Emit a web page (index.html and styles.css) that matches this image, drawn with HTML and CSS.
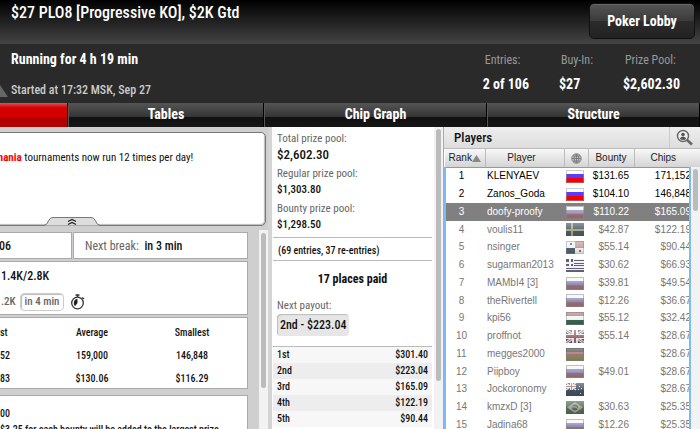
FILE: index.html
```html
<!DOCTYPE html>
<html lang="en">
<head>
    <meta charset="UTF-8">
    <meta name="viewport" content="width=device-width, initial-scale=1.0">
    <title>Tournament Lobby</title>
    <link rel="stylesheet" href="styles.css">
</head>
<body>

    <!-- flag shapes used by the players table -->
    <svg class="defs" aria-hidden="true">
      <defs>
        <linearGradient id="gloss" x1="0" y1="0" x2="0" y2="1">
          <stop offset="0" stop-color="#fff" stop-opacity=".35"/>
          <stop offset=".5" stop-color="#fff" stop-opacity=".1"/>
          <stop offset=".5" stop-color="#000" stop-opacity="0"/>
          <stop offset="1" stop-color="#000" stop-opacity=".12"/>
        </linearGradient>
      </defs>
      <symbol id="ru" viewBox="0 0 18 13">
        <path fill="#fff" d="M0 0h18v4H0z"/><path fill="#5a3cff" d="M0 4h18v4H0z"/><path fill="#f60000" d="M0 8h18v5H0z"/>
        <path fill="none" stroke="#999" stroke-opacity=".5" d="M.5.5h17v12H.5z"/>
      </symbol>
      <symbol id="ru-out" viewBox="0 0 18 13">
        <path fill="#f6f6f6" d="M0 0h18v4H0z"/><path fill="#9490be" d="M0 4h18v4H0z"/><path fill="#a07276" d="M0 8h18v5H0z"/>
        <path fill="url(#gloss)" stroke="#888" stroke-opacity=".5" d="M.5.5h17v12H.5z"/>
      </symbol>
      <symbol id="se" viewBox="0 0 18 13">
        <path fill="#4d5d68" d="M0 0h18v13H0z"/><path fill="#b0aa84" d="M0 6h18v2H0zM5 0h2v13H5z"/>
        <path fill="url(#gloss)" d="M0 0h18v13H0z"/>
      </symbol>
      <symbol id="pa" viewBox="0 0 18 13">
        <path fill="#f2f2f2" d="M0 0h18v13H0z"/><path fill="#c39a9e" d="M9 0h9v7H9z"/><path fill="#526370" d="M0 7h9v6H0z"/>
        <path fill="#667" d="M4 2h2v2H4z"/><path fill="#a06a6e" d="M13 9h2v2h-2z"/>
        <path fill="url(#gloss)" stroke="#888" stroke-opacity=".4" d="M.5.5h17v12H.5z"/>
      </symbol>
      <symbol id="gr" viewBox="0 0 18 13">
        <path fill="#f2f2f4" d="M0 0h18v13H0z"/>
        <path fill="#5f6078" d="M8 1h10v1H8zM8 4h10v1H8zM8 6h10v1H8zM0 9h18v1H0zM0 11h18v2H0zM0 0h3v3H0zM5 0h2v3H5zM0 5h3v2H0zM5 5h2v2H5z"/>
      </symbol>
      <symbol id="hu" viewBox="0 0 18 13">
        <path fill="#b08084" d="M0 0h18v4H0z"/><path fill="#f4f4f4" d="M0 4h18v4H0z"/><path fill="#3d6450" d="M0 8h18v5H0z"/>
        <path fill="url(#gloss)" stroke="#888" stroke-opacity=".4" d="M.5.5h17v12H.5z"/>
      </symbol>
      <symbol id="gb" viewBox="0 0 18 13">
        <path fill="#586080" d="M0 0h18v13H0z"/>
        <path stroke="#eee" stroke-width="3" d="M0 0l18 13M18 0L0 13"/><path stroke="#a07478" d="M0 0l18 13M18 0L0 13"/>
        <path fill="#f2f2f2" d="M6 0h6v13H6zM0 4h18v5H0z"/><path fill="#9a686c" d="M8 0h2v13H8zM0 5h18v3H0z"/>
        <path fill="url(#gloss)" d="M0 0h18v13H0z"/>
      </symbol>
      <symbol id="de" viewBox="0 0 18 13">
        <path fill="#555" d="M0 0h18v4H0z"/><path fill="#a47476" d="M0 4h18v4H0z"/><path fill="#8c8a5e" d="M0 8h18v5H0z"/>
        <path fill="url(#gloss)" stroke="#777" stroke-opacity=".5" d="M.5.5h17v12H.5z"/>
      </symbol>
      <symbol id="nz" viewBox="0 0 18 13">
        <path fill="#475062" d="M0 0h18v13H0z"/>
        <path stroke="#ddd" stroke-width="1.5" d="M0 0l10 7M10 0L0 7"/>
        <path fill="#eee" d="M4 0h3v7H4zM0 2h10v3H0z"/><path fill="#b0787c" d="M5 0h1v7H5zM0 3h10v1H0z"/>
        <path fill="#ddd" d="M13 3h1v1h-1zM15 5h1v1h-1zM12 6h1v1h-1zM14 10h1v1h-1z"/>
        <path fill="url(#gloss)" d="M0 0h18v13H0z"/>
      </symbol>
      <symbol id="br" viewBox="0 0 18 13">
        <path fill="#4f6e5c" d="M0 0h18v13H0z"/><path fill="#a8a67c" d="M9 1l8 5.500-8 5.500-8-5.500z"/>
        <circle cx="9" cy="6.500" r="3" fill="#5a6484"/><path stroke="#ccc" stroke-width=".7" fill="none" d="M6 6q3-1 6 1.500"/>
        <path fill="url(#gloss)" d="M0 0h18v13H0z"/>
      </symbol>
    </svg>

    <header class="titlebar">
      <h1>$27 PLO8 [Progressive KO], $2K Gtd</h1>
      <button class="lobby-button" type="button">Poker Lobby</button>
    </header>

    <section class="info">
      <div class="status">
        <p class="running">Running for 4 h 19 min</p>
        <p class="started">Started at 17:32 MSK, Sep 27</p>
        <svg class="corner" width="8" height="12" viewBox="0 0 8 12" aria-hidden="true"><path d="M0 0l8 12H0z" fill="#666"/></svg>
      </div>
      <dl class="stats">
        <div><dt>Entries:</dt><dd>2 of 106</dd></div>
        <div><dt>Buy-In:</dt><dd>$27</dd></div>
        <div><dt>Prize Pool:</dt><dd>$2,602.30</dd></div>
      </dl>
    </section>

    <nav class="tabs">
      <button class="tab active" type="button" aria-label="Home"></button>
      <button class="tab" type="button">Tables</button>
      <button class="tab" type="button">Chip Graph</button>
      <button class="tab" type="button">Structure</button>
    </nav>

    <main class="lobby">

      <section class="overview">
        <div class="message">
          <p><b>mania</b> tournaments now run 12 times per day!</p>
          <button class="collapse" type="button" aria-label="Collapse">
            <svg width="56" height="9" viewBox="0 0 56 9"><path d="M0 8.500Q3 8 5 3Q6 .5 9 .5H47Q50 .5 51 3Q53 8 56 8.500" fill="#ddd" stroke="#777"/><path d="M24 4.500l4-2 4 2M24 7.500l4-2 4 2" fill="none" stroke="#222" stroke-width="1.300"/></svg>
          </button>
        </div>

        <div class="scroller">
          <div class="cards">
            <div class="card-row">
              <div class="card entries">06</div>
              <div class="card break"><span class="label">Next break:</span> in 3 min</div>
            </div>
            <div class="card blinds">
              <p class="level">1.4K/2.8K</p>
              <p class="next"><span>.2K</span><span class="pill">in 4 min</span>
                <svg width="16" height="16" viewBox="0 0 16 16" aria-hidden="true"><circle cx="7.500" cy="9" r="5.800" fill="#fff" stroke="#333" stroke-width="1.300"/><path d="M7.500 9V5Q4 5 3.800 9Q4 11.500 5 12.200z" fill="#222"/><path d="M5.500 1h4M7.500 1v2M12 3.500l2 1.500" stroke="#333" stroke-width="1.500"/></svg>
              </p>
            </div>
            <div class="card stacks">
              <table>
                <tr><th>st</th><th>Average</th><th>Smallest</th></tr>
                <tr><td>52</td><td>159,000</td><td>146,848</td></tr>
                <tr><td>83</td><td>$130.06</td><td>$116.29</td></tr>
              </table>
            </div>
            <div class="card notes">
              <p>00</p>
              <p>$3.25 for each bounty will be added to the largest prize</p>
            </div>
          </div>
          <div class="track"><div class="thumb left-thumb"></div></div>
        </div>
      </section>

      <section class="prizes">
        <div class="prize-list">
          <dl class="pools">
            <dt>Total prize pool:</dt><dd class="big">$2,602.30</dd>
            <dt>Regular prize pool:</dt><dd>$1,303.80</dd>
            <dt>Bounty prize pool:</dt><dd>$1,298.50</dd>
          </dl>
          <p class="reentries">(69 entries, 37 re-entries)</p>
          <div class="payout">
            <h2>17 places paid</h2>
            <p class="label">Next payout:</p>
            <p class="next-payout">2nd - $223.04</p>
          </div>
          <table class="places">
            <tr><td>1st</td><td>$301.40</td></tr>
            <tr><td>2nd</td><td>$223.04</td></tr>
            <tr><td>3rd</td><td>$165.09</td></tr>
            <tr><td>4th</td><td>$122.19</td></tr>
            <tr><td>5th</td><td>$90.44</td></tr>
          </table>
        </div>
        <div class="track"><div class="thumb middle-thumb"></div></div>
      </section>

      <section class="players">
        <div class="players-title">
          <h2>Players</h2>
          <button class="search" type="button" aria-label="Find player">
            <svg width="18" height="18" viewBox="0 0 18 18"><circle cx="7" cy="7" r="5.500" fill="#eee" stroke="#666" stroke-width="1.400"/><circle cx="7" cy="5.500" r="1.800" fill="#555"/><path d="M3.800 10q.5-2.500 3.200-2.500t3.200 2.500q-3 2-6.400 0z" fill="#555"/><path d="M11 11l5 4.500" stroke="#666" stroke-width="2.600"/></svg>
          </button>
        </div>
        <div class="players-body">
          <table class="ranking">
            <colgroup><col class="c-rank"><col class="c-player"><col class="c-flag"><col class="c-bounty"><col></colgroup>
            <thead>
              <tr>
                <th>Rank<svg width="9" height="7" viewBox="0 0 9 7" aria-hidden="true"><path d="M4.500 0L9 7H0z" fill="#888"/></svg></th>
                <th>Player</th>
                <th aria-label="Country"><svg width="11" height="11" viewBox="0 0 11 11"><circle cx="5.500" cy="5.500" r="4.800" fill="#bbb" stroke="#888"/><path d="M5.500 1v9M1 5.500h9M2 3h7M2 8h7M5.500 1q-5 4.500 0 9M5.500 1q5 4.500 0 9" fill="none" stroke="#777" stroke-width=".8"/></svg></th>
                <th>Bounty</th>
                <th>Chips</th>
              </tr>
            </thead>
            <tbody>
              <tr class="live"><td>1</td><td>KLENYAEV</td><td><svg class="flag"><use href="#ru"/></svg></td><td>$131.65</td><td>171,152</td></tr>
              <tr class="live"><td>2</td><td>Zanos_Goda</td><td><svg class="flag"><use href="#ru"/></svg></td><td>$104.10</td><td>146,848</td></tr>
              <tr class="selected"><td>3</td><td>doofy-proofy</td><td><svg class="flag"><use href="#ru-out"/></svg></td><td>$110.22</td><td>$165.09</td></tr>
              <tr><td>4</td><td>voulis11</td><td><svg class="flag"><use href="#se"/></svg></td><td>$42.87</td><td>$122.19</td></tr>
              <tr><td>5</td><td>nsinger</td><td><svg class="flag"><use href="#pa"/></svg></td><td>$55.14</td><td>$90.44</td></tr>
              <tr><td>6</td><td>sugarman2013</td><td><svg class="flag"><use href="#gr"/></svg></td><td>$30.62</td><td>$66.93</td></tr>
              <tr><td>7</td><td>MAMbI4 [3]</td><td><svg class="flag"><use href="#ru-out"/></svg></td><td>$39.81</td><td>$49.54</td></tr>
              <tr><td>8</td><td>theRivertell</td><td><svg class="flag"><use href="#ru-out"/></svg></td><td>$12.26</td><td>$36.67</td></tr>
              <tr><td>9</td><td>kpi56</td><td><svg class="flag"><use href="#hu"/></svg></td><td>$55.12</td><td>$32.42</td></tr>
              <tr><td>10</td><td>proffnot</td><td><svg class="flag"><use href="#gb"/></svg></td><td>$55.14</td><td>$28.67</td></tr>
              <tr><td>11</td><td>megges2000</td><td><svg class="flag"><use href="#de"/></svg></td><td></td><td>$28.67</td></tr>
              <tr><td>12</td><td>Piipboy</td><td><svg class="flag"><use href="#ru-out"/></svg></td><td>$49.01</td><td>$28.67</td></tr>
              <tr><td>13</td><td>Jockoronomy</td><td><svg class="flag"><use href="#nz"/></svg></td><td></td><td>$28.67</td></tr>
              <tr><td>14</td><td>kmzxD [3]</td><td><svg class="flag"><use href="#br"/></svg></td><td>$30.63</td><td>$25.35</td></tr>
              <tr><td>15</td><td>Jadina68</td><td><svg class="flag"><use href="#ru-out"/></svg></td><td>$12.26</td><td>$25.35</td></tr>
            </tbody>
          </table>
          <div class="track"><div class="thumb right-thumb"></div></div>
        </div>
      </section>

    </main>

</body>
</html>
```

FILE: styles.css
```css
* {
  box-sizing: border-box;
}

body, h1, h2, p, dl, dd {
  margin: 0;
}

body {
  height: 100vh;
  display: flex;
  flex-direction: column;
  overflow: hidden;
  background: #cfcfcf;
  color: #111;
  font-family: "Roboto Condensed", "Liberation Sans Narrow", "Liberation Sans", sans-serif;
  font-size: 11px;
  font-weight: 500;
  line-height: 16px;
}

button {
  border: none;
  padding: 0;
  font-family: inherit;
  cursor: pointer;
}

table {
  border-collapse: collapse;
}

th, td {
  padding: 0;
  font-weight: inherit;
}

svg {
  display: block;
}

.defs {
  position: absolute;
  width: 0;
  height: 0;
}

.label {
  color: #666;
  font-weight: 400;
}

/* top */

.titlebar {
  display: flex;
  justify-content: space-between;
  align-items: flex-start;
  height: 44px;
  padding: 3px 5px 0 11px;
  background: linear-gradient(#000, #444);
  color: white;
}

h1 {
  font-size: 16px;
  font-weight: 500;
  line-height: 20px;
}

.lobby-button {
  width: 106px;
  height: 36px;
  border: 1px solid #111;
  border-radius: 5px;
  background: linear-gradient(#555, #3a3a3a 50%, #2c2c2c 50%, #222);
  box-shadow: inset 0 1px 0 #666;
  color: white;
  font-size: 14px;
  font-weight: bold;
}

.info {
  display: flex;
  justify-content: space-between;
  height: 59px;
  padding: 6px 20px 0 11px;
  background: #2a2a2a;
  color: white;
}

.status {
  position: relative;
}

.running {
  font-size: 14px;
  font-weight: bold;
  line-height: 18px;
}

.started {
  margin-top: 14px;
  color: #ccc;
  font-size: 12px;
}

.corner {
  position: absolute;
  left: -11px;
  bottom: 6px;
}

.stats {
  display: flex;
  gap: 30px;
}

.stats dt {
  padding-left: 2px;
  color: #999;
  font-size: 12px;
  font-weight: 400;
  line-height: 20px;
}

.stats dd {
  margin-top: 5px;
  font-size: 14px;
  font-weight: bold;
  line-height: 18px;
}

.tabs {
  display: grid;
  grid-template-columns: 68px 196px 223px 1fr;
  height: 24px;
}

.tab {
  padding-bottom: 2px;
  border-left: 1px solid #555;
  border-right: 1px solid #000;
  background: linear-gradient(#555, #333 60%, #111 60%, #161616);
  color: white;
  font-size: 14px;
  font-weight: bold;
}

.tab.active {
  border-left: none;
  background: linear-gradient(#e05050, #d40000 20%, #d40000 60%, #b00000 60%, #b00000);
}

.lobby {
  flex: 1;
  min-height: 0;
  display: grid;
  grid-template-columns: minmax(0, 1fr) 175px 257px;
}

.track {
  width: 9px;
  background: #f2f2f2;
}

.thumb {
  width: 5px;
  margin: 2px;
  border-radius: 3px;
  background: #bbb;
}

/* left column */

.overview {
  display: flex;
  flex-direction: column;
  overflow: hidden;
  padding-top: 5px;
}

.message {
  position: relative;
  flex: none;
  height: 94px;
  margin: 0 2px 4px -10px;
  padding: 17px 0 0 4px;
  border: 1px solid #777;
  border-radius: 5px;
  background: white;
  box-shadow: inset -1px -1px 1px #bbb;
}

.message p {
  font-weight: 400;
}

.message b {
  color: red;
}

.collapse {
  position: absolute;
  left: 53px;
  bottom: -1px;
  background: none;
}

.scroller {
  flex: 1;
  min-height: 0;
  display: flex;
  justify-content: space-between;
}

.cards {
  flex: 1;
  min-width: 0;
  margin: 2px 11px 0 -10px;
  display: flex;
  flex-direction: column;
  gap: 2px;
}

.card-row {
  flex: none;
  display: flex;
  gap: 1px;
}

.card {
  flex: none;
  border: 1px solid #aaa;
  background: white;
}

.entries, .break {
  height: 27px;
  font-size: 12px;
  line-height: 26px;
}

.entries {
  width: 82px;
  padding-left: 8px;
}

.card-row .break {
  flex: 1;
  padding-left: 11px;
}

.break .label {
  margin-right: 3px;
}

.blinds {
  height: 54px;
  padding: 6px 0 0 10px;
}

.level {
  font-size: 12px;
}

.next {
  display: flex;
  align-items: center;
  gap: 4px;
  margin-top: 9px;
  color: #666;
}

.pill {
  margin-right: 2px;
  padding: 0 4px;
  border: 1px solid #ccc;
  border-radius: 4px;
  box-shadow: inset 1px 1px 1px #bbb;
}

.stacks {
  height: 72px;
  padding: 3px 0 0 9px;
  font-size: 10px;
}

.stacks td, .stacks th {
  height: 23px;
  text-align: center;
}

.stacks th:first-child, .stacks td:first-child {
  width: 42px;
  text-align: left;
}

.stacks th:nth-child(2), .stacks td:nth-child(2) {
  width: 100px;
}

.stacks th:nth-child(3), .stacks td:nth-child(3) {
  width: 100px;
}

.notes {
  margin-top: 4px;
  padding: 10px 0 0 9px;
  font-size: 10px;
  white-space: nowrap;
}

/* prize pool column */

.prizes {
  display: flex;
  overflow: hidden;
  border-left: 4px solid #d4d4d4;
}

.prize-list {
  flex: 1;
  padding: 4px 2px 0 1px;
  background: white;
}

.pools {
  padding: 0 0 1px 4px;
}

.pools dt {
  color: #666;
  font-weight: 400;
}

.pools dd {
  margin-bottom: 3px;
}

.pools .big {
  font-size: 13px;
}

.reentries {
  padding: 5px 5px 1px;
  border-top: 1px solid #bbb;
  border-bottom: 1px solid #bbb;
  font-size: 10px;
}

.payout {
  padding: 10px 4px;
  border-bottom: 1px solid #bbb;
}

.payout h2 {
  font-size: 12px;
  text-align: center;
}

.payout .label {
  margin-top: 11px;
}

.next-payout {
  display: inline-block;
  padding: 3px;
  border-radius: 4px;
  background: #e6e6e6;
  box-shadow: inset 1px 1px 1px #bbb;
  font-size: 12px;
}

.places {
  width: 100%;
  font-size: 10px;
}

.places tr:nth-child(odd) {
  background: #f7f7f7;
}

.places tr:nth-child(even) {
  background: #ededed;
}

.places td {
  padding: 0 4px;
}

.places td:last-child {
  text-align: right;
}

/* players column */

.players {
  overflow: hidden;
  border-left: 1px solid #aaa;
}

.players-title {
  display: flex;
  height: 22px;
  border-bottom: 1px solid #bbb;
  background: linear-gradient(#eee, #ddd);
}

.players-title h2 {
  flex: 1;
  padding-left: 10px;
  font-size: 13px;
  font-weight: 500;
  line-height: 22px;
}

.search {
  width: 31px;
  padding-left: 6px;
  border-left: 1px solid #ccc;
  background: none;
}

.players-body {
  position: relative;
  background: white;
}

.ranking {
  width: 100%;
  table-layout: fixed;
  font-family: "Liberation Sans", Arial, sans-serif;
  font-size: 10px;
  font-weight: 400;
  line-height: 12px;
}

.c-rank {
  width: 40px;
}

.c-player {
  width: 79px;
}

.c-flag {
  width: 24px;
}

.c-bounty {
  width: 46px;
}

.ranking th {
  height: 18px;
  border-right: 1px solid #bbb;
  border-bottom: 1px solid #999;
  background: linear-gradient(#f8f8f8, #d4d4d4);
  color: #222;
}

.ranking th:nth-child(2) {
  padding-right: 6px;
}

.ranking th:last-child {
  padding-right: 8px;
  border-right: none;
}

.ranking th svg {
  display: inline-block;
  vertical-align: middle;
}

.ranking td {
  height: 18px;
  color: #777;
}

.ranking tbody tr:nth-child(4n) td {
  height: 17px;
}

.ranking td:first-child {
  padding-right: 8px;
  border-left: 2px solid #7cbcf4;
  text-align: center;
}

.ranking td:nth-child(2), .ranking td:nth-child(3) {
  padding-left: 2px;
}

.ranking td:nth-child(4) {
  padding-right: 5px;
  text-align: right;
}

.ranking td:nth-child(5) {
  padding-right: 9px;
  text-align: right;
}

.ranking .live td {
  color: #000;
}

.ranking .selected td {
  background: #808080;
  color: white;
}

.flag {
  width: 18px;
  height: 13px;
}

.players-body .track {
  position: absolute;
  top: 18px;
  right: 0;
  bottom: 0;
  width: 11px;
  border-left: 2px solid #7cbcf4;
}

.right-thumb {
  height: 42px;
}

.left-thumb {
  height: 155px;
  margin-top: 3px;
}

.middle-thumb {
  height: 252px;
}
```
